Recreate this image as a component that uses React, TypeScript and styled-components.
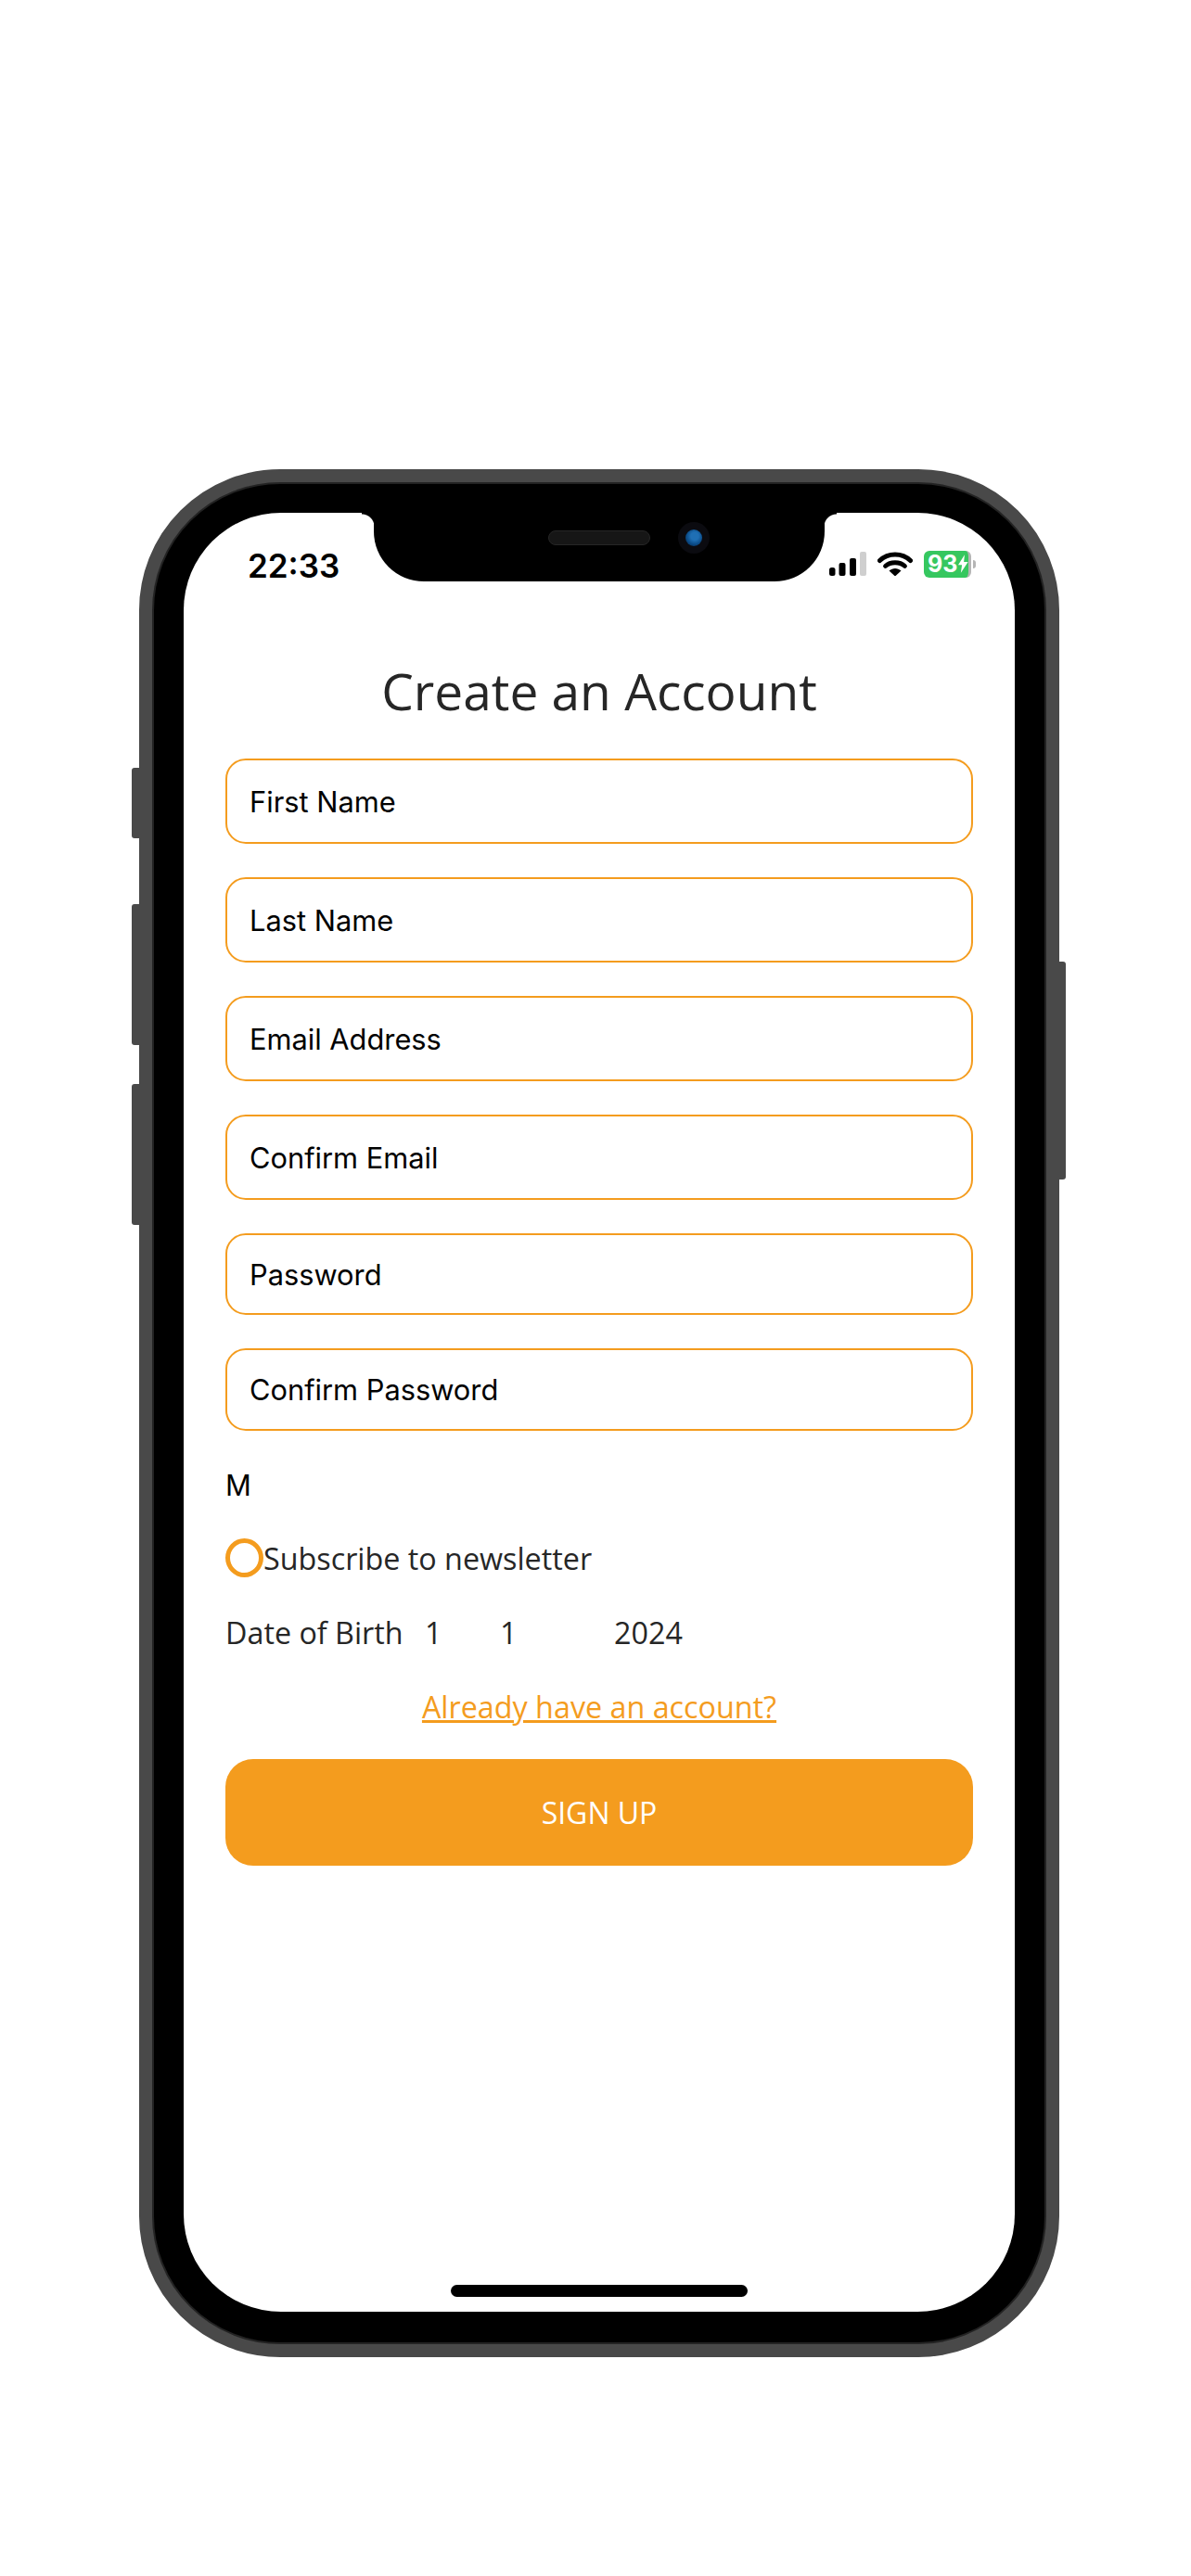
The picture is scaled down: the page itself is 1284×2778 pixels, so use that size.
import React from "react";
import styled, { createGlobalStyle } from "styled-components";

const Global = createGlobalStyle`
  html, body { margin: 0; padding: 0; background: #fff; }
  * { box-sizing: border-box; }
`;

const orange = "#f49c1e";
const ink = "#262626";
const openSans = `"Open Sans", "Noto Sans", sans-serif`;
const sf = `Inter, "Liberation Sans", sans-serif`;

const Page = styled.div`
  width: 1284px;
  height: 2778px;
  padding: 506px 142px 0 150px;
  overflow: hidden;
`;

const Frame = styled.div`
  position: relative;
  width: 992px;
  height: 2036px;
  border: 14px solid #494949;
  border-radius: 152px;
  background: #494949;
`;

const SideButton = styled.div<{ $side: "left" | "right"; $top: number; $height: number }>`
  position: absolute;
  top: ${(p) => p.$top}px;
  height: ${(p) => p.$height}px;
  ${(p) => (p.$side === "left" ? "left: -22px;" : "right: -21px;")}
  width: 8px;
  background: #494949;
  border-radius: ${(p) => (p.$side === "left" ? "3px 0 0 3px" : "0 3px 3px 0")};
`;

const Bezel = styled.div`
  position: relative;
  height: 100%;
  background: #000;
  border: 2px solid #232323;
  border-radius: 138px;
  padding: 31px 32px 33px 32px;
`;

const Screen = styled.div`
  position: relative;
  height: 100%;
  background: #fff;
  border-radius: 105px;
  display: flex;
  flex-direction: column;
`;

const Notch = styled.div`
  position: absolute;
  top: 0;
  left: 205px;
  width: 486px;
  height: 74px;
  background: #000;
  border-radius: 0 0 54px 54px;
  display: flex;
  align-items: flex-start;
  justify-content: center;
  gap: 30px;
  padding: 10px 0 0 64px;
  &::before, &::after {
    content: "";
    position: absolute;
    top: 0;
    width: 13px;
    height: 15px;
  }
  &::before {
    left: -13px;
    background: radial-gradient(circle at 0 100%, transparent 13px, #000 14px);
  }
  &::after {
    right: -13px;
    background: radial-gradient(circle at 100% 100%, transparent 13px, #000 14px);
  }
`;

const Speaker = styled.div`
  width: 110px;
  height: 16px;
  margin-top: 9px;
  border-radius: 8px;
  background: #161616;
  border: 1px solid #262626;
`;

const Camera = styled.div`
  width: 34px;
  height: 34px;
  border-radius: 50%;
  background: #0b0b10;
  display: flex;
  align-items: center;
  justify-content: center;
`;

const Lens = styled.div`
  width: 18px;
  height: 18px;
  border-radius: 50%;
  background: radial-gradient(circle at 55% 40%, #1f6fb4 0 28%, #0a4a86 60%, #06213f 100%);
`;

const HomeBar = styled.div`
  position: absolute;
  left: 288px;
  bottom: 16px;
  width: 320px;
  height: 13px;
  background: #000;
  border-radius: 7px;
`;

const StatusBar = styled.div`
  display: flex;
  align-items: center;
  justify-content: space-between;
  height: 72px;
  padding: 38px 47px 0 69px;
`;

const Time = styled.span`
  font-family: ${sf};
  font-weight: 600;
  font-size: 35px;
  line-height: 36px;
  padding-top: 4px;
  color: #000;
`;

const StatusIcons = styled.div`
  display: flex;
  align-items: center;
  gap: 12px;
`;

const Battery = styled.div`
  position: relative;
  width: 51px;
  height: 29px;
  border-radius: 6px;
  background: #36c75f;
  border-right: 3px solid #b5b5b5;
  display: flex;
  align-items: center;
  padding-left: 4px;
  gap: 1px;
  color: #fff;
  font-family: ${sf};
  font-weight: 700;
  font-size: 25px;
  line-height: 29px;
  &::after {
    content: "";
    position: absolute;
    right: -8px;
    top: 10px;
    width: 3px;
    height: 9px;
    background: #b5b5b5;
    border-radius: 0 3px 3px 0;
  }
`;

const Form = styled.form`
  display: flex;
  flex-direction: column;
  padding: 0 45px;
`;

const Title = styled.h1`
  margin: 83px 0 0;
  font-family: ${openSans};
  font-weight: 400;
  font-size: 55px;
  line-height: 74px;
  text-align: center;
  color: ${ink};
`;

const Field = styled.div<{ $height: number }>`
  height: ${(p) => p.$height}px;
  margin-top: 36px;
  border: 2.5px solid ${orange};
  border-radius: 22px;
  display: flex;
  align-items: center;
  padding-left: 24px;
  font-family: ${sf};
  font-size: 30.8px;
  color: #000;
`;

const Gender = styled.div`
  margin-top: 37px;
  font-family: ${sf};
  font-size: 30.8px;
  line-height: 44px;
  color: #000;
`;

const CheckRow = styled.div`
  display: flex;
  align-items: center;
  margin-top: 35px;
  height: 42px;
`;

const Radio = styled.span`
  width: 41px;
  height: 42px;
  border: 5px solid ${orange};
  border-radius: 50%;
  flex: none;
`;

const BodyText = styled.span<{ $width?: number }>`
  font-family: ${openSans};
  font-size: 32.3px;
  line-height: 46px;
  color: ${ink};
  ${(p) => (p.$width ? `width: ${p.$width}px;` : "")}
`;

const DateRow = styled.div`
  display: flex;
  margin-top: 36px;
  height: 46px;
`;

const SignIn = styled.a`
  margin-top: 34px;
  font-family: ${openSans};
  font-size: 32.3px;
  line-height: 46px;
  text-align: center;
  text-decoration: underline;
  color: ${orange};
`;

const Submit = styled.button`
  margin-top: 34px;
  height: 115px;
  border: 0;
  border-radius: 30px;
  background: ${orange};
  color: #fff;
  font-family: ${openSans};
  font-size: 32px;
`;

const Signal = () => (
  <svg width="40" height="26" viewBox="0 0 40 26">
    <rect x="0" y="17" width="6.5" height="9" rx="2.5" fill="#000" />
    <rect x="10.5" y="12" width="7" height="14" rx="2" fill="#000" />
    <rect x="22" y="7" width="7" height="19" rx="2" fill="#000" />
    <rect x="33" y="0" width="7" height="26" rx="2" fill="#cfcfcf" />
  </svg>
);

const Wifi = () => (
  <svg width="38" height="26" viewBox="0 0 38 26" fill="none">
    <path d="M2.5 9.5C11.5 .8 26.5 .8 35.5 9.5" stroke="#000" strokeWidth="5" strokeLinecap="round" />
    <path d="M8.5 15.5C14 10.5 24 10.5 29.5 15.5" stroke="#000" strokeWidth="4.8" strokeLinecap="round" />
    <path d="M12.5 20.5C16.5 17 21.5 17 25.5 20.5L19 26.5Z" fill="#000" />
  </svg>
);

const Bolt = () => (
  <svg width="13" height="24" viewBox="0 0 13 24">
    <path d="M8.5 0L0 13.5H5L3.5 24L13 9.5H7.5Z" fill="#fff" />
  </svg>
);

const fields: [string, number][] = [
  ["First Name", 92],
  ["Last Name", 92],
  ["Email Address", 92],
  ["Confirm Email", 92],
  ["Password", 88],
  ["Confirm Password", 89],
];

export default function App() {
  return (
    <Page>
      <Global />
      <Frame>
        <SideButton $side="left" $top={308} $height={76} />
        <SideButton $side="left" $top={455} $height={152} />
        <SideButton $side="left" $top={649} $height={152} />
        <SideButton $side="right" $top={517} $height={235} />
        <Bezel>
          <Screen>
            <Notch>
              <Speaker />
              <Camera>
                <Lens />
              </Camera>
            </Notch>
            <StatusBar>
              <Time>22:33</Time>
              <StatusIcons>
                <Signal />
                <Wifi />
                <Battery>
                  93
                  <Bolt />
                </Battery>
              </StatusIcons>
            </StatusBar>
            <Form>
              <Title>Create an Account</Title>
              {fields.map(([label, height]) => (
                <Field key={label} $height={height}>
                  {label}
                </Field>
              ))}
              <Gender>M</Gender>
              <CheckRow>
                <Radio />
                <BodyText>Subscribe to newsletter</BodyText>
              </CheckRow>
              <DateRow>
                <BodyText $width={215}>Date of Birth</BodyText>
                <BodyText $width={81}>1</BodyText>
                <BodyText $width={123}>1</BodyText>
                <BodyText>2024</BodyText>
              </DateRow>
              <SignIn>Already have an account?</SignIn>
              <Submit type="button">SIGN UP</Submit>
            </Form>
            <HomeBar />
          </Screen>
        </Bezel>
      </Frame>
    </Page>
  );
}
